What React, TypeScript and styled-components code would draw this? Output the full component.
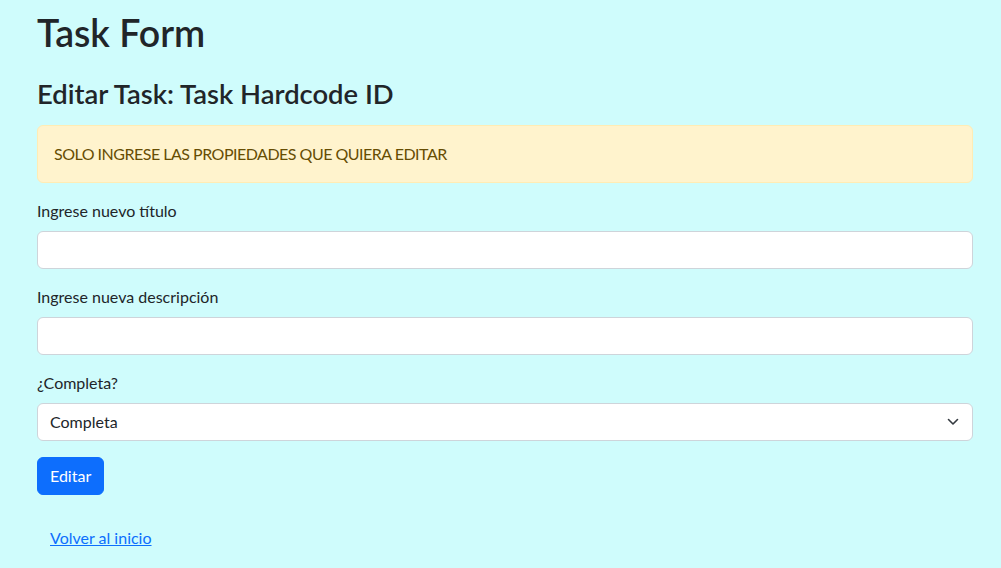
import React from 'react'
import styled, { createGlobalStyle } from 'styled-components'

const GlobalStyle = createGlobalStyle`
  body {
    margin: 0;
    background-color: #cffcfc;
    font-family: Lato, 'Open Sans', sans-serif;
    font-size: 16px;
    line-height: 1.5;
    color: #212529;
  }
  * {
    box-sizing: border-box;
  }
`

const Container = styled.div`
  padding: 0 28px 0 37px;
  display: flex;
  flex-direction: column;
`

const Title = styled.h1`
  margin: 10px 0 23px;
  font-size: 37.5px;
  font-weight: 600;
  line-height: 45px;
`

const SubTitle = styled.h3`
  margin: 0 0 15px;
  font-size: 27.4px;
  font-weight: 600;
  line-height: 32px;
`

const Alert = styled.div`
  padding: 16px;
  margin-bottom: 16px;
  color: #664d03;
  background-color: #fff3cd;
  border: 1px solid #ffecb5;
  border-radius: 6px;
  letter-spacing: -0.5px;
`

const Field = styled.div`
  display: flex;
  flex-direction: column;
  margin-bottom: 16px;
`

const Label = styled.label`
  margin-bottom: 8px;
`

const Input = styled.input`
  display: block;
  width: 100%;
  height: 38px;
  padding: 6px 12px;
  font: inherit;
  color: #212529;
  background: #fff;
  border: 1px solid #ced4da;
  border-radius: 6px;
`

const SelectWrap = styled.div`
  position: relative;
`

const Select = styled.select`
  display: block;
  width: 100%;
  height: 38px;
  padding: 6px 36px 6px 12px;
  font: inherit;
  color: #212529;
  background: #fff;
  border: 1px solid #ced4da;
  border-radius: 6px;
  appearance: none;
`

const Chevron = styled.svg`
  position: absolute;
  right: 14px;
  top: 15px;
  width: 12px;
  height: 8px;
  pointer-events: none;
`

const Button = styled.button<{ variant?: 'primary' | 'link' }>`
  align-self: flex-start;
  padding: 6px 12px;
  font: inherit;
  line-height: 1.5;
  border-radius: 6px;
  cursor: pointer;
  ${({ variant }) =>
    variant === 'link'
      ? `
    color: #0d6efd;
    background: transparent;
    border: 1px solid transparent;
    text-decoration: underline;
  `
      : `
    color: #fff;
    background: #0d6efd;
    border: 1px solid #0d6efd;
  `}
`

const BackRow = styled.div`
  margin-top: 24px;
  display: flex;
`

const App = () => (
  <>
    <GlobalStyle />
    <Container>
      <Title>Task Form</Title>
      <SubTitle>Editar Task: Task Hardcode ID</SubTitle>
      <Alert>SOLO INGRESE LAS PROPIEDADES QUE QUIERA EDITAR</Alert>
      <form onSubmit={(e) => e.preventDefault()}>
        <Field>
          <Label htmlFor="titulo">Ingrese nuevo título</Label>
          <Input id="titulo" type="text" />
        </Field>
        <Field>
          <Label htmlFor="descripcion">Ingrese nueva descripción</Label>
          <Input id="descripcion" type="text" />
        </Field>
        <Field>
          <Label htmlFor="completa">¿Completa?</Label>
          <SelectWrap>
            <Select id="completa" defaultValue="true">
              <option value="true">Completa</option>
              <option value="false">Incompleta</option>
            </Select>
            <Chevron viewBox="0 0 12 8">
              <path
                d="M1.5 1.5 6 6l4.5-4.5"
                fill="none"
                stroke="#343a40"
                strokeWidth="1.6"
                strokeLinecap="round"
                strokeLinejoin="round"
              />
            </Chevron>
          </SelectWrap>
        </Field>
        <Button type="submit">Editar</Button>
      </form>
      <BackRow>
        <Button variant="link">Volver al inicio</Button>
      </BackRow>
    </Container>
  </>
)

export default App
